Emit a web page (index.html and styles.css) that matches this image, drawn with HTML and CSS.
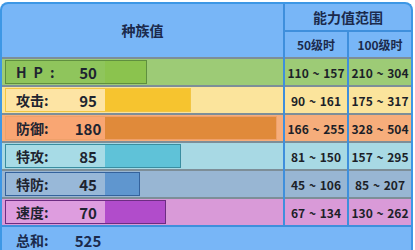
FILE: index.html
```html
<!DOCTYPE html>
<html lang="zh">
<head>
<meta charset="utf-8">
<link rel="stylesheet" href="styles.css">
</head>
<body>
<div class="tbl">
  <div class="h h-base">种族值</div>
  <div class="h h-range">能力值范围</div>
  <div class="h h-lv">50级时</div>
  <div class="h h-lv">100级时</div>

  <div class="st hp"><div class="box" style="width:142px"><span class="nm sp">HP:</span><span class="vl">50</span><span class="fill"></span></div></div>
  <div class="rc hp">110 ~ 157</div>
  <div class="rc hp">210 ~ 304</div>

  <div class="st atk"><div class="box" style="width:186px"><span class="nm">攻击:</span><span class="vl">95</span><span class="fill"></span></div></div>
  <div class="rc atk">90 ~ 161</div>
  <div class="rc atk">175 ~ 317</div>

  <div class="st def"><div class="box" style="width:272px"><span class="nm">防御:</span><span class="vl">180</span><span class="fill"></span></div></div>
  <div class="rc def">166 ~ 255</div>
  <div class="rc def">328 ~ 504</div>

  <div class="st spa"><div class="box" style="width:176px"><span class="nm">特攻:</span><span class="vl">85</span><span class="fill"></span></div></div>
  <div class="rc spa">81 ~ 150</div>
  <div class="rc spa">157 ~ 295</div>

  <div class="st spd"><div class="box" style="width:135px"><span class="nm">特防:</span><span class="vl">45</span><span class="fill"></span></div></div>
  <div class="rc spd">45 ~ 106</div>
  <div class="rc spd">85 ~ 207</div>

  <div class="st spe"><div class="box" style="width:161px"><span class="nm">速度:</span><span class="vl">70</span><span class="fill"></span></div></div>
  <div class="rc spe">67 ~ 134</div>
  <div class="rc spe">130 ~ 262</div>

  <div class="total"><span class="nm">总和:</span><span class="vl">525</span></div>
</div>
</body>
</html>
```

FILE: styles.css
```css
html, body {
  margin: 0;
  padding: 0;
  background: #ffffff;
}
body {
  padding-top: 2px;
  font-family: "Noto Sans CJK SC", "Noto Sans", sans-serif;
  font-weight: bold;
  color: #1e2430;
}
.tbl {
  width: 409px;
  border: 2px solid #3d97e5;
  border-bottom: none;
  border-radius: 8px 8px 0 0;
  background: #3f8fdc;
  display: grid;
  grid-template-columns: 281px 62px 62px;
  column-gap: 2px;
  overflow: hidden;
}
.h {
  background: #78b6f7;
  color: #1b2a4c;
  display: flex;
  align-items: center;
  justify-content: center;
}
.h-base {
  grid-row: span 2;
  font-size: 14px;
  padding-bottom: 1px;
}
.h-range {
  grid-column: span 2;
  height: 26px;
  border-bottom: 2px solid #3f8fdc;
  font-size: 14px;
}
.h-lv {
  height: 25px;
  font-size: 12px;
}
.st, .rc {
  height: 26px;
  border-top: 2px solid #7d8e98;
}
.st {
  display: flex;
  align-items: center;
  padding-left: 3px;
}
.rc {
  display: flex;
  align-items: center;
  justify-content: center;
  font-size: 12px;
  color: #1c1f28;
  word-spacing: 1px;
  white-space: pre;
}
.box {
  box-sizing: border-box;
  height: 24px;
  display: flex;
  align-items: stretch;
  border: 1px solid transparent;
}
.nm {
  width: 55px;
  padding-left: 10px;
  font-size: 14px;
  display: flex;
  align-items: center;
  background: var(--lab);
}
.nm.sp {
  letter-spacing: 7px;
}
.vl {
  width: 34px;
  font-size: 15px;
  display: flex;
  align-items: center;
  justify-content: center;
  background: var(--lab);
}
.fill {
  flex: 1;
  background: var(--bar);
}
.hp { background: #9dcb76; --lab: #8fc55c; --bar: #8bc34e; }
.hp .box { border-color: #5f8f3f; }
.atk { background: #fbe49c; --lab: #fde4a4; --bar: #f6c42f; }
.atk .box { border-color: #f2c542; }
.def { background: #f6ad7b; --lab: #f9a673; --bar: #e08a3a; }
.def .box { border-color: #eea06a; }
.spa { background: #a8d9e4; --lab: #a7dbe6; --bar: #5fc2d8; }
.spa .box { border-color: #3a8da0; }
.spd { background: #98b6d3; --lab: #98b8d8; --bar: #5f96cf; }
.spd .box { border-color: #34629c; }
.spe { background: #d99ad8; --lab: #de9ddf; --bar: #b14ccb; }
.spe .box { border-color: #6d2c82; }
.total {
  grid-column: span 3;
  height: 26px;
  border-top: 2px solid #3f8fdc;
  background: #78b6f7;
  display: flex;
  align-items: center;
  padding-left: 4px;
  color: #1b2a4c;
}
.total .nm, .total .vl {
  background: transparent;
}
.total .vl { font-size: 15px; }
```
